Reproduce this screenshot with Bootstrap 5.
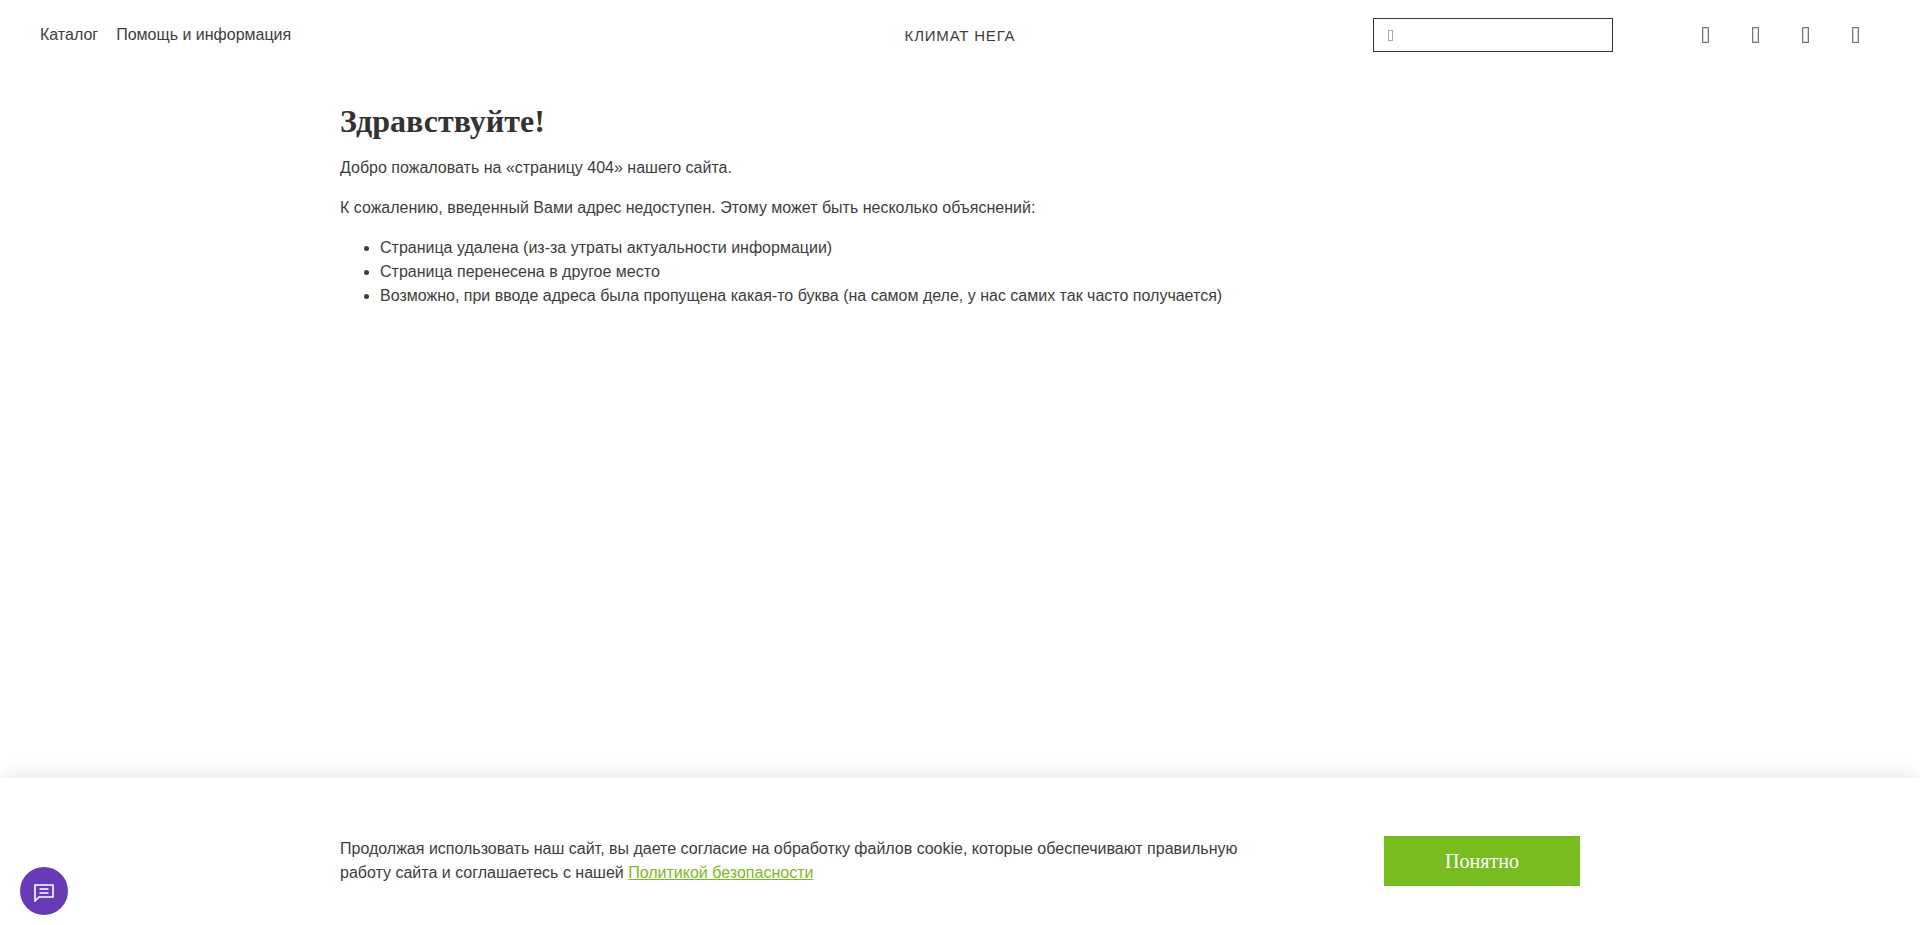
<!DOCTYPE html>
<html lang="ru">
<head>
    <meta charset="UTF-8">
    <meta name="viewport" content="width=device-width, initial-scale=1.0">
    <title>Климат Нега</title>
    <link href="https://cdn.jsdelivr.net/npm/bootstrap@5.3.0/dist/css/bootstrap.min.css" rel="stylesheet">
    <style>
        body { font-family: "Liberation Sans", Arial, sans-serif; font-size: 16px; line-height: 24px; color: #3d3d3d; background: #fff; }
        .site-head { height: 70px; padding: 0 40px; }
        .head-side { flex: 1 1 0; }
        .head-link { color: #3d3d3d; text-decoration: none; margin-right: 18px; }
        .site-logo { color: #3d3d3d; text-decoration: none; font-size: 15px; letter-spacing: .8px; text-transform: uppercase; margin-top: 2px; }
        .search-box { width: 240px; height: 34px; border: 1px solid #333; padding: 0 14px; margin-right: 89px; }
        .search-glyph { width: 5px; height: 11px; border: 1px solid #aaa; margin-top: 1px; }
        .head-icons { gap: 43px; margin-right: 21px; }
        .head-glyph { width: 7px; height: 16px; border: 1px solid #777; box-shadow: inset 0 0 0 1px #d4d4d4; }
        .page-body { width: 1240px; margin: 0 auto; padding-top: 30px; }
        .page-title { font-family: "Liberation Serif", "Times New Roman", serif; font-weight: 700; font-size: 32px; line-height: 42px; margin: 0 0 14px; color: #333; }
        .page-body p { margin-bottom: 16px; }
        .page-body ul { padding-left: 40px; margin: 0; }
        .cookie-bar { height: 147px; background: #fff; box-shadow: 0 0 20px rgba(0,0,0,.12); padding-top: 58px; }
        .cookie-in { width: 1240px; margin: 0 auto; }
        .cookie-text { width: 925px; }
        .cookie-text a { color: #78bc20; }
        .cookie-btn { width: 196px; height: 50px; background: #78bc20; color: #fff; border: 0; border-radius: 0; font-family: "Liberation Serif", serif; font-size: 20px; padding: 0; }
        .chat-btn { position: fixed; left: 20px; bottom: 10px; width: 48px; height: 48px; border-radius: 50%; background: #673ab7; border: 0; }
        .chat-btn svg { margin-top: 3px; }
    </style>
</head>
<body>
    <div class="d-flex flex-column min-vh-100">
        <!-- шапка -->
        <header class="site-head d-flex align-items-center">
            <nav class="head-side d-flex">
                <a class="head-link" href="#">Каталог</a>
                <a class="head-link" href="#">Помощь и информация</a>
            </nav>
            <a class="site-logo" href="#">Климат Нега</a>
            <div class="head-side d-flex align-items-center justify-content-end">
                <div class="search-box d-flex align-items-center"><span class="search-glyph"></span></div>
                <div class="head-icons d-flex">
                    <span class="head-glyph"></span>
                    <span class="head-glyph"></span>
                    <span class="head-glyph"></span>
                    <span class="head-glyph"></span>
                </div>
            </div>
        </header>

        <main class="page-body flex-grow-1">
            <h1 class="page-title">Здравствуйте!</h1>
            <p>Добро пожаловать на «страницу 404» нашего сайта.</p>
            <p>К сожалению, введенный Вами адрес недоступен. Этому может быть несколько объяснений:</p>
            <ul>
                <li>Страница удалена (из-за утраты актуальности информации)</li>
                <li>Страница перенесена в другое место</li>
                <li>Возможно, при вводе адреса была пропущена какая-то буква (на самом деле, у нас самих так часто получается)</li>
            </ul>
        </main>

        <div class="cookie-bar">
            <div class="cookie-in d-flex justify-content-between align-items-center">
                <div class="cookie-text">Продолжая использовать наш сайт, вы даете согласие на обработку файлов cookie, которые обеспечивают правильную работу сайта и соглашаетесь с нашей <a href="#">Политикой безопасности</a></div>
                <button class="cookie-btn btn" type="button">Понятно</button>
            </div>
        </div>
    </div>

    <button class="chat-btn d-flex align-items-center justify-content-center p-0" type="button" aria-label="Чат">
        <svg width="20" height="18" viewBox="0 0 20 18" fill="none" stroke="#fff" stroke-width="1.6">
            <path d="M1 1h18v12H5l-4 4z"/>
            <path d="M5.5 5h9M5.5 9h9"/>
        </svg>
    </button>

    <script src="https://cdn.jsdelivr.net/npm/bootstrap@5.3.0/dist/js/bootstrap.bundle.min.js"></script>
</body>
</html>
